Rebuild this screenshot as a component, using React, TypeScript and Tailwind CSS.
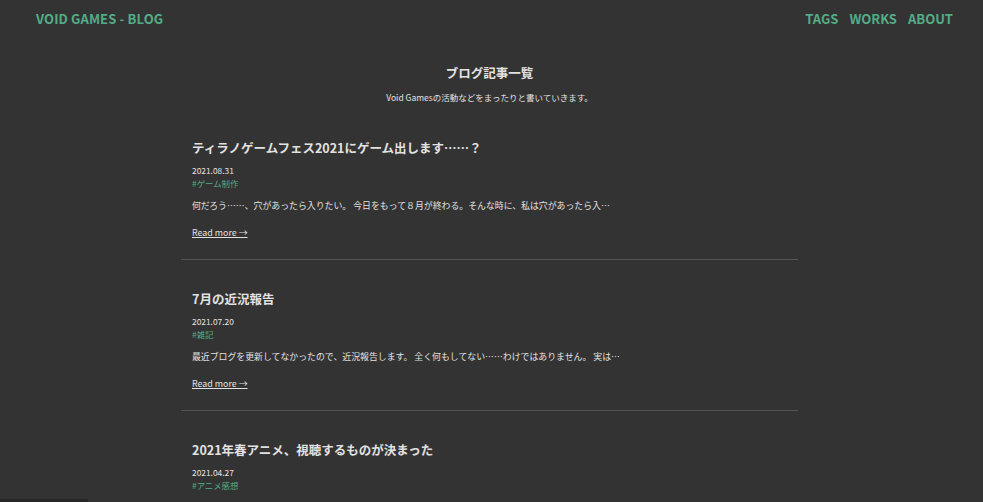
const posts = [
  {
    title: 'ティラノゲームフェス2021にゲーム出します……？',
    date: '2021.08.31',
    tag: '#ゲーム制作',
    excerpt: '何だろう……、穴があったら入りたい。 今日をもって８月が終わる。そんな時に、私は穴があったら入…',
  },
  {
    title: '7月の近況報告',
    date: '2021.07.20',
    tag: '#雑記',
    excerpt: '最近ブログを更新してなかったので、近況報告します。 全く何もしてない……わけではありません。 実は…',
  },
  {
    title: '2021年春アニメ、視聴するものが決まった',
    date: '2021.04.27',
    tag: '#アニメ感想',
    excerpt: '春アニメが始まって数週間、ようやく視聴するアニメが決まりました。 今期は…',
  },
]

export default function App() {
  return (
    <div
      className="min-h-screen bg-[#333333] text-[#e2e2e2] overflow-hidden"
      style={{ fontFamily: '"Noto Sans CJK JP", "Noto Sans", sans-serif' }}
    >
      {/* ヘッダー */}
      <header className="h-[38px] flex items-center justify-between pl-[36px] pr-[30px]">
        <a className="text-[13px] font-bold tracking-[0.01em] text-[#52ad86]">VOID GAMES - BLOG</a>
        <nav className="flex items-center gap-[11px] text-[13px] font-bold text-[#52ad86]">
          <a>TAGS</a>
          <a>WORKS</a>
          <a>ABOUT</a>
        </nav>
      </header>

      <main className="w-[621px] mx-auto pr-[4px]">
        <div className="mt-[25px] text-center">
          <h1 className="text-[12.5px] leading-[20px] font-bold">ブログ記事一覧</h1>
          <p className="mt-[8px] text-[8.5px] leading-[12px]">Void Gamesの活動などをまったりと書いていきます。</p>
        </div>

        {posts.map((p, i) => (
          <article
            key={p.date}
            className={`px-[11px] pb-[18px] border-b border-[#545454] ${i === 0 ? 'pt-[35px]' : 'pt-[29px]'}`}
          >
            <h2 className="text-[12.5px] leading-[20px] font-bold">{p.title}</h2>
            <p className="mt-[6px] text-[8.4px] leading-[13px]">{p.date}</p>
            <p className="text-[8.4px] leading-[13px] text-[#52ad86]">{p.tag}</p>
            <p className="mt-[9px] text-[8.9px] leading-[14px] whitespace-nowrap">{p.excerpt}</p>
            <a className="inline-block mt-[13px] text-[8.9px] leading-[14px] underline">Read more →</a>
          </article>
        ))}
      </main>

      <div className="fixed left-0 bottom-0 w-[88px] h-[3px] bg-[#262626]" />
    </div>
  )
}
